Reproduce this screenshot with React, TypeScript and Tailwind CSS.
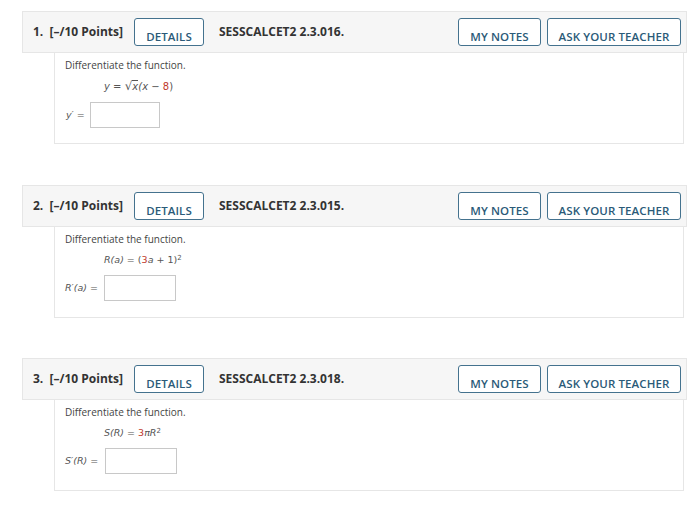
import React from "react";

const btn =
  "h-[28px] border border-[#44728e] rounded-[3px] bg-white text-[#2b5a78] font-semibold text-[11.5px] tracking-[0.1px] flex items-end justify-center pb-[3px] leading-none";

function Header({ n, code }: { n: number; code: string }) {
  return (
    <div className="h-[42px] bg-[#f6f6f6] border border-[#e6e6e6] flex items-center pl-[10px] pr-[5px]">
      <div className="text-[12px] font-bold text-[#333] w-[101px] whitespace-pre">{`${n}.  [–/10 Points]`}</div>
      <div className={`${btn} w-[70px]`}>DETAILS</div>
      <div className="ml-[15px] text-[12px] font-bold text-[#333]">{code}</div>
      <div className="flex-1" />
      <div className={`${btn} w-[83px]`}>MY NOTES</div>
      <div className={`${btn} w-[134px] ml-[6px]`}>ASK YOUR TEACHER</div>
    </div>
  );
}

const math = "font-['DejaVu_Sans',Verdana,sans-serif] italic text-[9.5px] text-[#555]";

function Body({
  eq,
  label,
  inputW,
  labelW,
}: {
  eq: React.ReactNode;
  label: React.ReactNode;
  inputW: string;
  labelW: string;
}) {
  return (
    <div className="ml-[32px] mr-[3px] h-[91px] border border-t-0 border-[#e6e6e6] bg-white pl-[10px] pt-[5px]">
      <div className="text-[10px] text-[#444] leading-[14px]">Differentiate the function.</div>
      <div className={`${math} leading-[14px] mt-[7px] pl-[39px] whitespace-nowrap`}>{eq}</div>
      <div className="flex items-center mt-[8px]">
        <div className={`${math} ${labelW} whitespace-nowrap`}>{label}</div>
        <div className={`${inputW} h-[26px] border border-[#c8c8c8] bg-white`} />
      </div>
    </div>
  );
}

export default function App() {
  return (
    <div className="w-[700px] h-[507px] bg-white pt-[11px] pl-[22px] pr-[13px] font-['Open_Sans',sans-serif]">
      <div>
        <Header n={1} code="SESSCALCET2 2.3.016." />
        <Body
          labelW="w-[25px]"
          inputW="w-[70px]"
          label={
            <span className="pl-[1px]">
              y′ <span className="not-italic">=</span>
            </span>
          }
          eq={
            <span className="text-[10px]">
              y <span className="not-italic">=</span>{" "}
              <span className="not-italic text-[12px]">√</span>
              <span className="border-t border-[#555]">x</span>(x <span className="not-italic">−</span>{" "}
              <span className="not-italic text-[#c0392b]">8</span>
              <span className="not-italic">)</span>
            </span>
          }
        />
      </div>
      <div className="mt-[41px]">
        <Header n={2} code="SESSCALCET2 2.3.015." />
        <Body
          labelW="w-[39px]"
          inputW="w-[72px]"
          label={
            <span>
              R′(a) <span className="not-italic">=</span>
            </span>
          }
          eq={
            <span>
              R(a) <span className="not-italic">=</span> <span className="not-italic">(</span>
              <span className="not-italic text-[#c0392b]">3</span>a <span className="not-italic">+ 1)</span>
              <sup className="not-italic text-[7px]">2</sup>
            </span>
          }
        />
      </div>
      <div className="mt-[40px]">
        <Header n={3} code="SESSCALCET2 2.3.018." />
        <Body
          labelW="w-[40px]"
          inputW="w-[72px]"
          label={
            <span>
              S′(R) <span className="not-italic">=</span>
            </span>
          }
          eq={
            <span>
              S(R) <span className="not-italic">=</span>{" "}
              <span className="not-italic text-[#c0392b]">3</span>πR
              <sup className="not-italic text-[7px]">2</sup>
            </span>
          }
        />
      </div>
    </div>
  );
}
